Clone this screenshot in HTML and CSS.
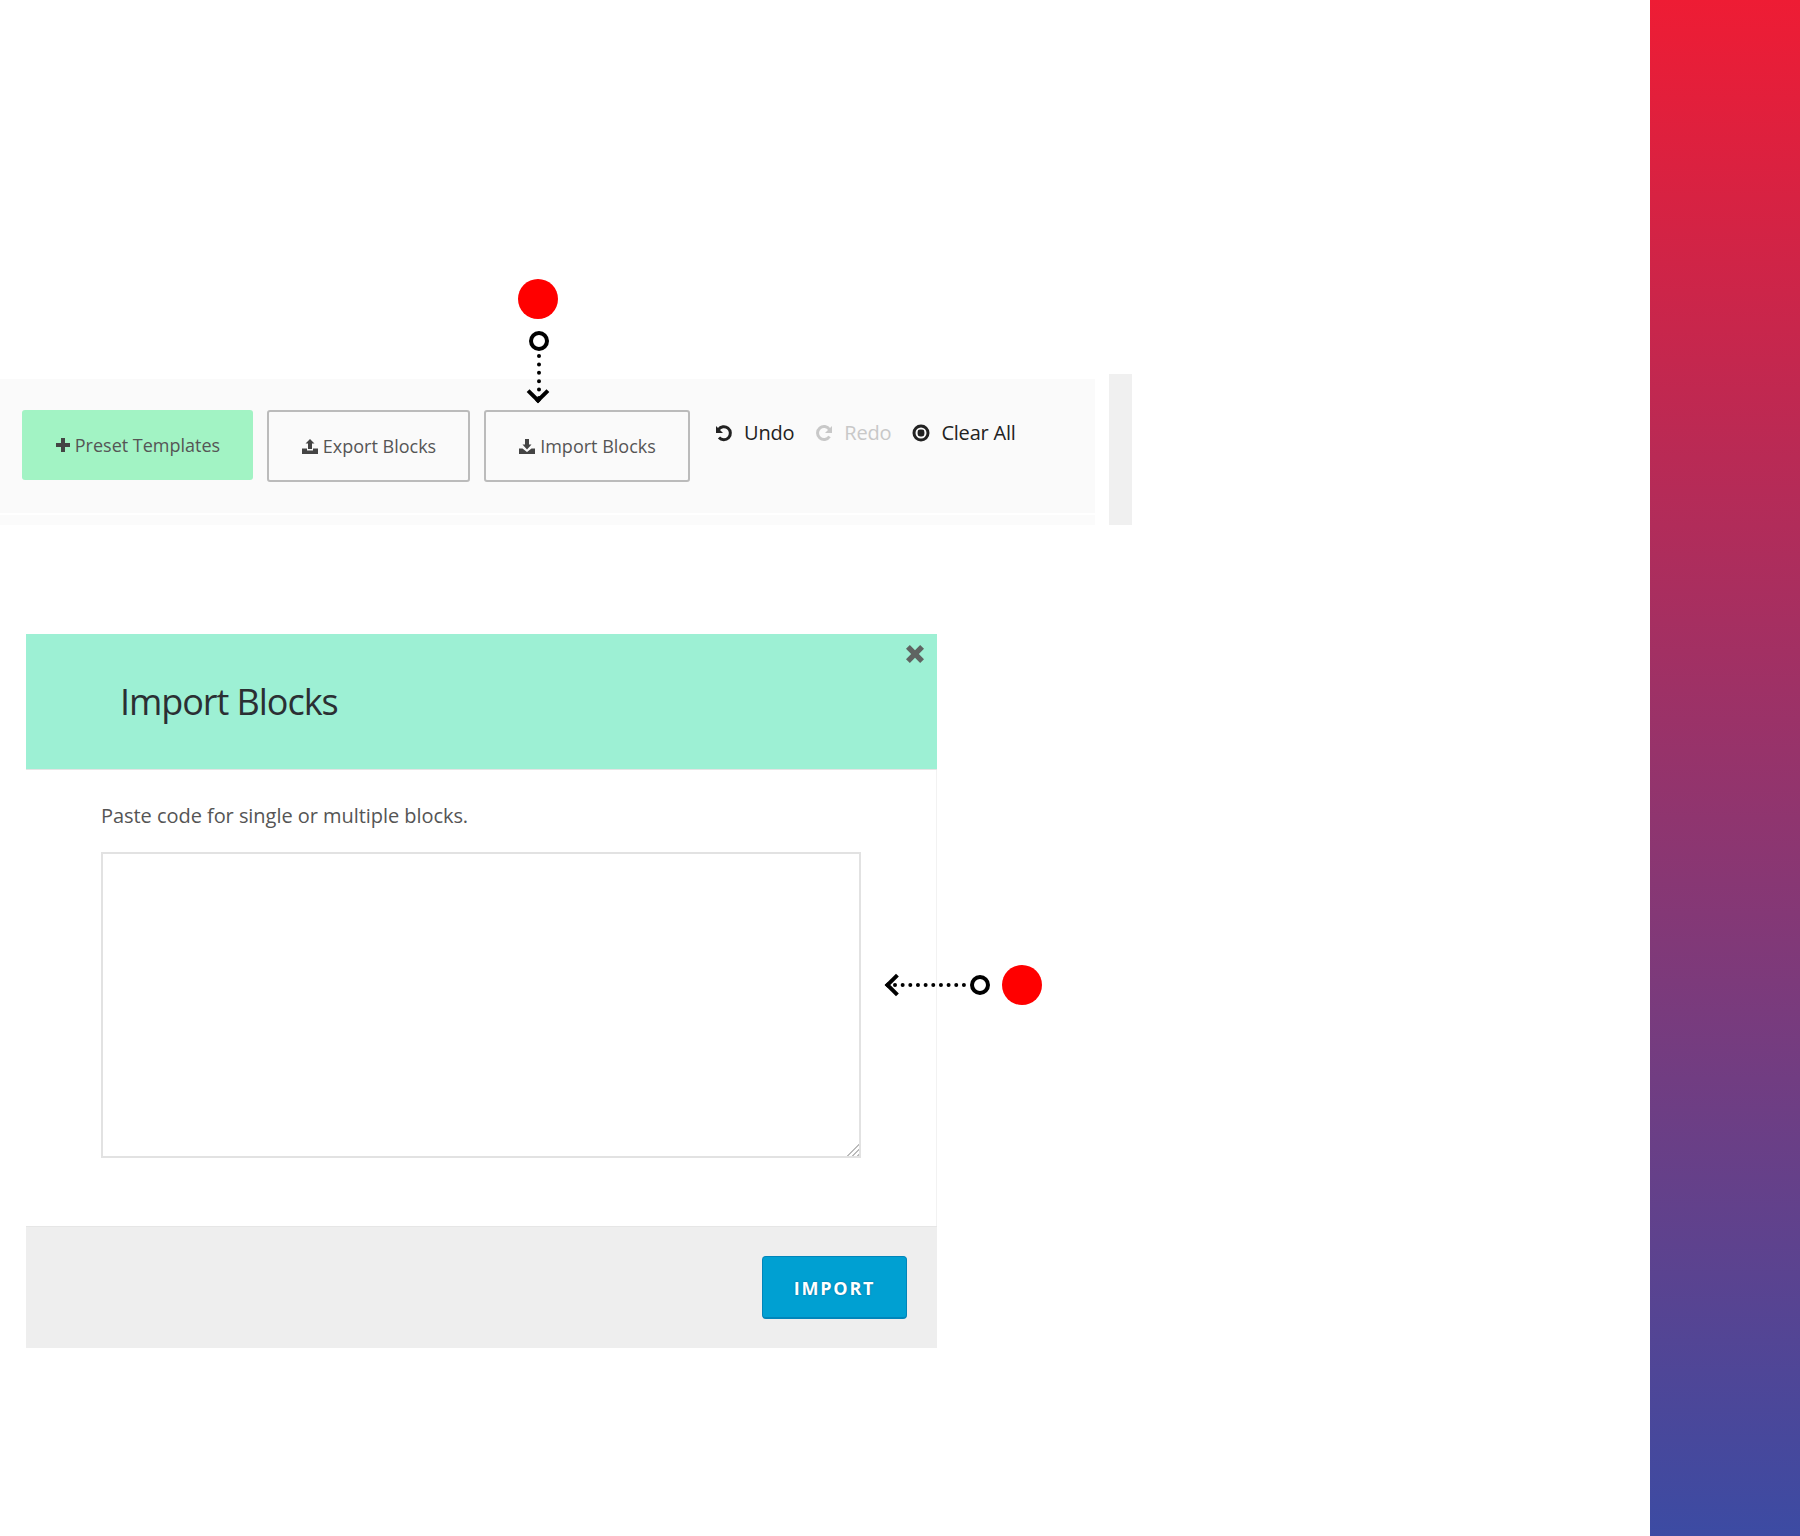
FILE: index.html
```html
<!DOCTYPE html>
<html lang="en">
<head>
<meta charset="utf-8">
<title>Import Blocks</title>
<link rel="stylesheet" href="styles.css">
</head>
<body>
<div class="page">
  <main class="main">
    <section class="toolbar-row">
      <div class="toolbar-wrap">
        <div class="toolbar">
          <button class="btn btn-preset"><svg class="ico" viewBox="0 0 16 16"><path d="M6 1h4v5h5v4h-5v5H6v-5H1V6h5z"/></svg>Preset Templates</button>
          <button class="btn btn-outline btn-export"><svg class="ico" viewBox="0 0 16 16"><path d="M8 1l4.500 4.500H10V11H6V5.500H3.500zM0 10.500h5V12.500h6V10.500h5V16H0z"/></svg>Export Blocks</button>
          <button class="btn btn-outline btn-import"><svg class="ico" viewBox="0 0 16 16"><path d="M6 1h4v5.500h2.500L8 11.500 3.500 6.500H6zM0 10.500h3.500L8 14l4.500-3.500H16V16H0z"/></svg>Import Blocks</button>
          <div class="actions">
            <span class="action"><svg class="aico" viewBox="0 0 18 18"><path class="stroke" d="M3.500 5.500A6.500 6.500 0 1 1 4 13.500"/><path d="M1 2v7h7z"/></svg>Undo</span>
            <span class="action action-off"><svg class="aico" viewBox="0 0 18 18"><path class="stroke" d="M14.500 5.500A6.500 6.500 0 1 0 14.500 12.500"/><path d="M17 2v7h-7z"/></svg>Redo</span>
            <span class="action"><svg class="aico" viewBox="0 0 18 18"><circle class="stroke" cx="9" cy="9" r="7"/><rect x="5.600" y="5.600" width="6.800" height="6.800" rx="2.400"/></svg>Clear All</span>
          </div>
        </div>
        <div class="toolbar-band"></div>
      </div>
      <div class="strip"></div>
    </section>

    <section class="modal">
      <header class="modal-head">
        <h1 class="modal-title">Import Blocks</h1>
        <svg class="close" viewBox="2 2 14 14"><path d="M2 5l3-3 4 4 4-4 3 3-4 4 4 4-3 3-4-4-4 4-3-3 4-4z"/></svg>
      </header>
      <div class="modal-body">
        <p class="hint">Paste code for single or multiple blocks.</p>
        <textarea class="code" aria-label="Code"></textarea>
      </div>
      <footer class="modal-foot">
        <button class="btn-primary">IMPORT</button>
      </footer>
    </section>
  </main>
  <aside class="side"></aside>
</div>

<div class="pointer pointer-down">
  <span class="dot"></span>
  <span class="ring"></span>
  <span class="line"></span>
  <span class="chev"></span>
</div>
<div class="pointer pointer-left">
  <span class="dot"></span>
  <span class="ring"></span>
  <span class="line"></span>
  <span class="chev"></span>
</div>
</body>
</html>
```
FILE: styles.css
```css
* { box-sizing: border-box; }
html, body { margin: 0; padding: 0; background: #fff; }
body { font-family: "Open Sans", "Liberation Sans", sans-serif; color: #555; }

.page { display: flex; width: 1800px; height: 1536px; overflow: hidden; }
.main { width: 1650px; padding-top: 374px; }
.side { width: 150px; background: linear-gradient(180deg, #ee1c34 0%, #3c4ba3 100%); }

.toolbar-row { display: flex; align-items: flex-start; height: 151px; }
.toolbar-wrap { width: 1095px; padding-top: 5px; }
.toolbar { display: flex; align-items: flex-start; height: 134px; padding: 31px 0 0 22px; background: #fafafa; }
.toolbar-band { height: 10px; margin-top: 2px; background: #fbfbfb; }
.strip { width: 23px; height: 151px; margin-left: 14px; background: #f0f0f0; }

.btn { display: flex; align-items: center; justify-content: center; gap: 4px; height: 72px; padding: 0; border-radius: 3px; font: 400 18px/1 "Open Sans", sans-serif; color: #555; }
.ico { width: 16px; height: 16px; fill: #444; }
.btn-preset { width: 231px; height: 70px; border: 0; background: #a2f3c4; margin-right: 14px; }
.btn-outline { gap: 5px; padding-left: 1px; border: 2px solid #bbb; background: #fafafa; }
.btn-export { width: 203px; margin-right: 14px; }
.btn-import { width: 206px; }

.actions { display: flex; gap: 21px; margin: 10px 0 0 25px; }
.action { display: flex; align-items: center; gap: 11px; font-size: 20px; line-height: 26px; color: #222; letter-spacing: -0.2px; }
.action-off { color: #c8c8c8; }
.aico { width: 18px; height: 18px; fill: currentColor; }
.aico .stroke { fill: none; stroke: currentColor; stroke-width: 3; }

.modal { width: 911px; margin: 109px 0 0 26px; }
.modal-head { position: relative; display: flex; align-items: center; height: 136px; padding-left: 94px; background: #9df0d4; border-bottom: 1px solid #e4e4e4; }
.modal-title { margin: 0; font-size: 36px; font-weight: 400; letter-spacing: -1.05px; color: #2b2f33; }
.close { position: absolute; top: 11px; right: 13px; width: 18px; height: 18px; fill: #5f6462; }
.modal-body { height: 456px; padding: 33px 75px 0; border-right: 1px solid #f2f2f2; }
.hint { margin: 0 0 23px; font-size: 20px; line-height: 26px; color: #555; letter-spacing: -0.05px; }
.code { display: block; width: 760px; height: 306px; border: 2px solid #e2e2e2; background: #fff; margin: 0; }
.code::-webkit-resizer { background: linear-gradient(135deg, #fff 50%, transparent 50%), repeating-linear-gradient(135deg, transparent 0, transparent 2px, #bbb 2px, #bbb 3.500px); }
.modal-foot { display: flex; justify-content: flex-end; align-items: flex-start; height: 122px; padding: 29px 30px 0 0; background: #eee; border-top: 1px solid #e6e6e6; }
.btn-primary { width: 145px; height: 63px; padding-top: 3px; border: 1px solid #0085ba; border-bottom-width: 2px; border-radius: 4px; background: #00a0d2; color: #fff; font: 700 18px/1 "Open Sans", sans-serif; letter-spacing: 1.8px; text-shadow: 0 0 2px #006799; }

.pointer { position: absolute; }
.dot { position: absolute; width: 40px; height: 40px; border-radius: 50%; background: #f00; }
.ring { position: absolute; width: 20px; height: 20px; border: 4px solid #000; border-radius: 50%; background: #fff; }
.line { position: absolute; }
.chev { position: absolute; width: 16px; height: 16px; border: solid #000; border-width: 0 4px 4px 0; }

.pointer-down { left: 518px; top: 279px; width: 40px; height: 127px; }
.pointer-down .ring { left: 11px; top: 52px; }
.pointer-down .line { left: 19px; top: 75px; height: 46px; border-left: 4px dotted #000; }
.pointer-down .chev { left: 12px; top: 105px; transform: rotate(45deg); }

.pointer-left { left: 885px; top: 965px; width: 157px; height: 40px; }
.pointer-left .dot { left: 117px; top: 0; }
.pointer-left .ring { left: 85px; top: 10px; }
.pointer-left .line { left: 8px; top: 18px; width: 73px; border-top: 4px dotted #000; }
.pointer-left .chev { left: 3px; top: 12px; transform: rotate(135deg); }
```
